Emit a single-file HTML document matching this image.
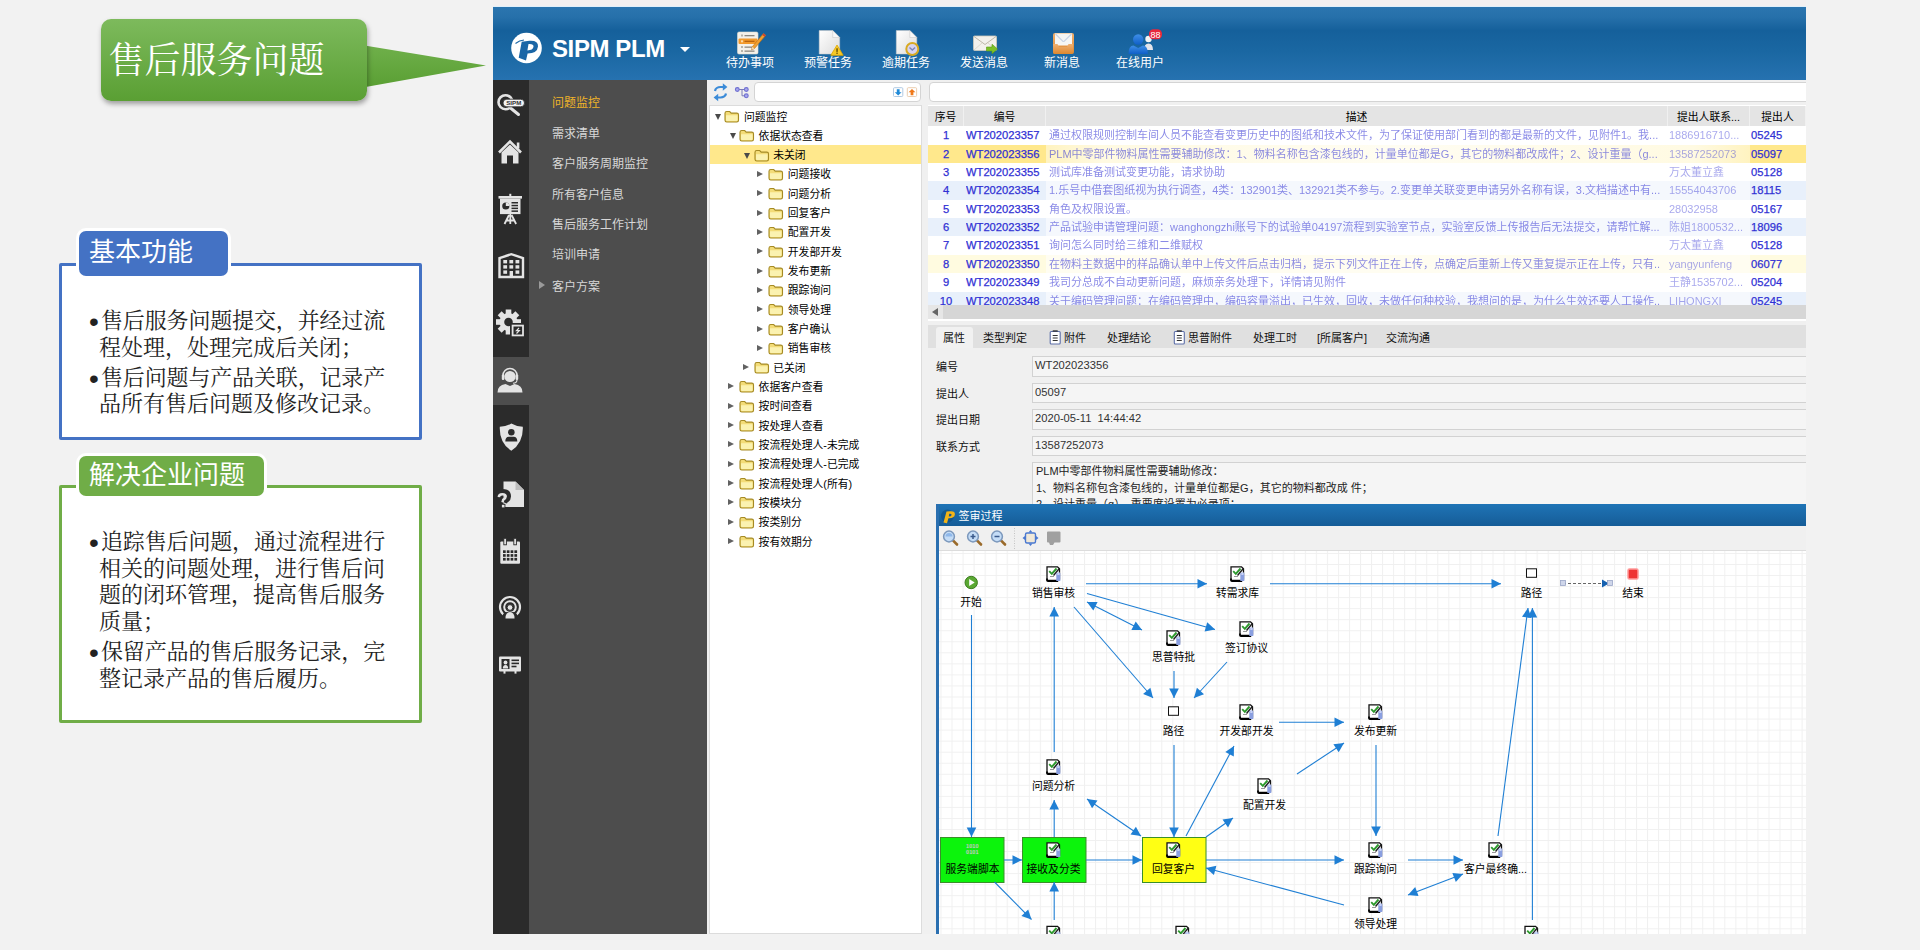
<!DOCTYPE html><html lang="zh"><head><meta charset="utf-8"><title>售后服务问题</title><style>
*{box-sizing:border-box;margin:0;padding:0}
html,body{width:1920px;height:950px;overflow:hidden;background:#f2f2f2}
body{position:relative;font-family:"Liberation Sans","Noto Sans CJK SC",sans-serif;font-size:12px;color:#000}
.abs{position:absolute}
.serif{font-family:"Liberation Serif","Noto Serif CJK SC",serif}
/* left slide part */
#callout{left:101px;top:19px;width:266px;height:82px;border-radius:10px;background:linear-gradient(#7dba5c,#5a9f33);box-shadow:1px 3px 5px rgba(0,0,0,.35)}
#callout-t{left:108.500px;top:33px;font-size:36px;line-height:56px;color:#fff;white-space:nowrap}
.box{background:#fff;border:3px solid #4472c4;border-radius:2px}
.tab{color:#fff;font-size:26px;border-radius:7px;box-shadow:0 0 0 3px #fff;white-space:nowrap;padding-left:10px}
.para{font-size:22px;line-height:26.6px;color:#222;white-space:nowrap}
/* app */
#app{left:493px;top:7px;width:1313px;height:927px;background:#f0f0f0;overflow:hidden}
#hdr{left:0;top:0;width:1313px;height:73px;background:linear-gradient(#2b75af 0%,#2670aa 14%,#15609b 32%,#1a67a2 60%,#2672b0 100%)}
#side1{left:0;top:73px;width:36px;height:854px;background:#2b2b2b}
#side2{left:36px;top:73px;width:178px;height:854px;background:#4d4d4d}
.menu{left:59px;color:#d8d8d8;font-size:12px;white-space:nowrap;line-height:16px}
.tb{color:#fff;font-size:12px;white-space:nowrap;text-align:center;width:70px;line-height:14px}
#treep{left:216px;top:98px;width:213px;height:829px;background:#fff;border:1px solid #dcdcdc}
.tr{left:0;width:211px;height:19.32px;line-height:19.32px;font-size:10.8px;white-space:nowrap}
.tw{position:absolute;top:0}
#grid{left:435px;top:98px;width:878px;height:216px;background:#fff}
.gh{top:.5px;height:21.500px;line-height:22px;background:#e4e4e4;text-align:center;font-size:10.8px;border-right:1px solid #f0f0f0;white-space:nowrap;overflow:hidden}
.gr{left:0;width:878px;height:18.4px;line-height:18.4px;font-size:11.2px;color:#3030d4;white-space:nowrap;-webkit-text-stroke:.25px #3030d4}
.gc{position:absolute;top:0;overflow:hidden;height:100%}
.blur{filter:blur(.6px);opacity:.56;font-size:11px;-webkit-text-stroke:0}
</style></head><body>
<svg class="abs" style="left:360px;top:40px" width="130" height="55" viewBox="0 0 130 55"><defs><linearGradient id="cg" x1="0" y1="0" x2="0" y2="1"><stop offset="0" stop-color="#6fb04b"/><stop offset="1" stop-color="#5a9f33"/></linearGradient></defs><polygon points="0,4.700 126,25.400 0,48" fill="url(#cg)"/></svg>
<div id="callout" class="abs"></div>
<div id="callout-t" class="abs serif">售后服务问题</div>
<div class="abs box" style="left:59px;top:263px;width:363px;height:177px"></div>
<div class="abs tab" style="left:79px;top:231px;width:149px;height:45px;line-height:43px;background:#4472c4">基本功能</div>
<div class="abs box" style="left:59px;top:485px;width:363px;height:238px;border-color:#70ad47"></div>
<div class="abs tab" style="left:79px;top:456px;width:185px;height:40px;line-height:38px;background:#70ad47">解决企业问题</div>
<div class="abs" style="left:89px;top:308.0px;font:28px/28px 'Liberation Sans',sans-serif;color:#222">•</div>
<div class="abs para serif" style="left:101px;top:307.7px;letter-spacing:-.15px">售后服务问题提交，并经过流</div>
<div class="abs para serif" style="left:99px;top:334.7px">程处理，处理完成后关闭；</div>
<div class="abs" style="left:89px;top:365.0px;font:28px/28px 'Liberation Sans',sans-serif;color:#222">•</div>
<div class="abs para serif" style="left:101px;top:364.7px;letter-spacing:-.15px">售后问题与产品关联，记录产</div>
<div class="abs para serif" style="left:99px;top:390.7px">品所有售后问题及修改记录。</div>
<div class="abs" style="left:89px;top:529.0px;font:28px/28px 'Liberation Sans',sans-serif;color:#222">•</div>
<div class="abs para serif" style="left:101px;top:528.7px;letter-spacing:-.15px">追踪售后问题，通过流程进行</div>
<div class="abs para serif" style="left:99px;top:555.7px">相关的问题处理，进行售后问</div>
<div class="abs para serif" style="left:99px;top:581.7px">题的闭环管理，提高售后服务</div>
<div class="abs para serif" style="left:99px;top:608.7px">质量；</div>
<div class="abs" style="left:89px;top:639.0px;font:28px/28px 'Liberation Sans',sans-serif;color:#222">•</div>
<div class="abs para serif" style="left:101px;top:638.7px;letter-spacing:-.15px">保留产品的售后服务记录，完</div>
<div class="abs para serif" style="left:99px;top:665.7px">整记录产品的售后履历。</div>
<div class="abs" style="left:493px;top:0;width:1313px;height:7px;background:#f3f0f0;border-bottom:1px solid #e2f0fa"></div>
<div id="app" class="abs">
<div id="hdr" class="abs"></div>
<div id="side1" class="abs"></div><div id="side2" class="abs"></div>
<div class="abs" style="left:0;top:350px;width:36px;height:48px;background:#4d4d4d"></div>
<div class="abs" style="left:59px;top:25px;font-size:24px;font-weight:bold;color:#fff;line-height:34px;letter-spacing:-.4px;white-space:nowrap">SIPM PLM</div>
<svg class="abs" style="left:17px;top:25px" width="32" height="32" viewBox="0 0 32 32"><circle cx="16.500" cy="16" r="15.300" fill="#fff"/><path d="M11.700 9.700L19.500 8.800Q28.500 8.300 28 14.500Q27.300 21.500 17.600 21.600L16 28.500L8.700 25.800Z M18.500 12Q23.800 11.600 23.500 14.800Q23 18.300 17.400 18.400Z" fill="#1a66a6" fill-rule="evenodd"/><path d="M5.500 11.500Q9.500 8.300 14 8" stroke="#1a66a6" stroke-width="1.100" fill="none"/></svg>
<div class="abs" style="left:187px;top:40px;width:0;height:0;border:5px solid transparent;border-top:5.500px solid #fff"></div>
<div class="abs tb" style="left:222px;top:49px">待办事项</div>
<div class="abs tb" style="left:300px;top:49px">预警任务</div>
<div class="abs tb" style="left:378px;top:49px">逾期任务</div>
<div class="abs tb" style="left:456px;top:49px">发送消息</div>
<div class="abs tb" style="left:534px;top:49px">新消息</div>
<div class="abs tb" style="left:612px;top:49px">在线用户</div>
<div class="abs menu" style="top:88px;color:#f0b429">问题监控</div>
<div class="abs menu" style="top:119px;">需求清单</div>
<div class="abs menu" style="top:149px;">客户服务周期监控</div>
<div class="abs menu" style="top:180px;">所有客户信息</div>
<div class="abs menu" style="top:210px;">售后服务工作计划</div>
<div class="abs menu" style="top:240px;">培训申请</div>
<div class="abs menu" style="top:272px;">客户方案</div>
<div class="abs" style="left:46px;top:274px;width:0;height:0;border:4px solid transparent;border-left:6px solid #9a9a9a"></div>
<svg class="abs" style="left:0;top:0" width="1313" height="73" viewBox="493 7 1313 73" font-family="Liberation Sans, sans-serif">
<defs><linearGradient id="pg" x1="0" y1="0" x2="1" y2="1"><stop offset="0" stop-color="#ffffff"/><stop offset="1" stop-color="#dcdcdc"/></linearGradient><linearGradient id="og" x1="0" y1="0" x2="0" y2="1"><stop offset="0" stop-color="#f0b070"/><stop offset="1" stop-color="#dd8830"/></linearGradient><linearGradient id="ug" x1="0" y1="0" x2="0" y2="1"><stop offset="0" stop-color="#3f8fe8"/><stop offset="1" stop-color="#0f5fc8"/></linearGradient></defs>
<rect x="737.500" y="32" width="20.500" height="22" rx="1.500" fill="#f4f1ea" stroke="#e2ddd0" stroke-width=".6"/>
<rect x="738.500" y="38.500" width="19" height="5.500" rx="1" fill="#f39a2b"/>
<g fill="#b8b4aa"><rect x="741" y="34.500" width="2" height="2"/><rect x="741" y="46" width="2" height="2"/><rect x="741" y="50" width="2" height="2"/></g><g fill="#8c8880"><rect x="744.500" y="35" width="10" height="1.300"/><rect x="744.500" y="46.500" width="8" height="1.300"/><rect x="744.500" y="50.500" width="10" height="1.300"/></g><rect x="741" y="40.300" width="2" height="2" fill="#fbd9a8"/><rect x="744.500" y="40.700" width="10" height="1.300" fill="#b8640f"/>
<path d="M763.500 33.500l2.200 1.800L754.500 48.500l-3 1.300l.8-3.100z" fill="#f0a030" stroke="#b86a10" stroke-width=".6"/><path d="M751.500 49.800l.8-3.100l2.200 1.800z" fill="#f2d9b0"/><path d="M762.300 35l2.200 1.800l1.200-1.500l-2.200-1.800z" fill="#d04030"/>
<path d="M819.2 30.500h13.500l7 7V54h-20.500z" fill="url(#pg)" stroke="#c8c8c8" stroke-width=".5"/><path d="M832.7 30.500v7h7z" fill="#f8f8f8" stroke="#c4c4c4" stroke-width=".5"/>
<path d="M837 45l6.200 10.300h-12.400z" fill="#f6c928" stroke="#e0a800" stroke-width=".8" stroke-linejoin="round"/><rect x="836.400" y="48.300" width="1.300" height="3.600" fill="#5a4500"/><rect x="836.400" y="52.600" width="1.300" height="1.300" fill="#5a4500"/>
<path d="M896.3 30.500h13.500l7 7V54h-20.500z" fill="url(#pg)" stroke="#c8c8c8" stroke-width=".5"/><path d="M909.8 30.500v7h7z" fill="#f8f8f8" stroke="#c4c4c4" stroke-width=".5"/>
<circle cx="912.300" cy="49" r="6" fill="#d9d3ee" stroke="#d9aa20" stroke-width="2"/><path d="M909.500 47.500l2.800 2.500l2.800-2.500" stroke="#7d86b8" stroke-width="1.400" fill="none"/>
<rect x="973.500" y="36" width="23" height="14.500" rx="1" fill="#f3f1ec" stroke="#cfcabb" stroke-width=".8"/><path d="M974 36.500l11 8l11-8" stroke="#bdb8a8" stroke-width="1" fill="none"/><path d="M974 50l8-7M996 50l-8-7" stroke="#d8d4c6" stroke-width=".8"/>
<path d="M986.500 47h5.500v-2.800l5.500 4.800l-5.500 4.800v-2.800h-5.500z" fill="#7cc028" stroke="#5a9a10" stroke-width=".6"/>
<rect x="1053" y="33" width="21" height="21" rx="2" fill="url(#og)"/><path d="M1055 33.500h17v12h-17z" fill="#f6f6f4"/><path d="M1055.500 34l7.500 7.500h1l7.500-7.500" stroke="#c9d4e4" stroke-width="1.200" fill="none"/><path d="M1053 44h4.500l1.500 3h8l1.500-3h4.500v8q0 2-2 2h-16q-2 0-2-2z" fill="url(#og)"/>
<circle cx="1148.500" cy="39" r="3.200" fill="#f4f4f4"/><path d="M1144 50q0-6.500 4.500-6.500t4.500 6.500z" fill="#e4e4ea"/>
<circle cx="1138.200" cy="39.500" r="5.200" fill="url(#ug)"/><path d="M1128.500 54q0-8.500 5-8.500l4.700 2.500l4.700-2.500q5 0 5 8.500z" fill="url(#ug)"/>
<rect x="1149" y="29.300" width="13" height="10" rx="4.500" fill="#e8283c"/><text x="1155.500" y="37.600" font-size="9" fill="#fff" text-anchor="middle">88</text>
</svg>
<svg class="abs" style="left:0;top:73px" width="36" height="854" viewBox="493 80 36 854" font-family="Liberation Sans, sans-serif">
<circle cx="505.500" cy="102.200" r="7" fill="none" stroke="#e4e4e4" stroke-width="2.600"/><path d="M510.500 108l8 6.500" stroke="#e4e4e4" stroke-width="3" stroke-linecap="round"/><rect x="503" y="99.200" width="21.500" height="7.600" rx="3.800" fill="#f4f4f4" stroke="#2b2b2b" stroke-width=".8"/><text x="513.800" y="105.300" font-size="6.200" font-weight="bold" fill="#333" text-anchor="middle">SIPM</text>
<path d="M499 152.500L510 141.500L521 152.500" stroke="#e4e4e4" stroke-width="2.600" fill="none" stroke-linejoin="miter"/><path d="M501.500 152.500L510 144.500L518.500 152.500V163.500H513V155.500H507V163.500H501.500z" fill="#e4e4e4"/><rect x="516.800" y="142.500" width="2.600" height="6" fill="#e4e4e4"/>
<rect x="498.500" y="196" width="23.500" height="2.600" fill="#e4e4e4"/><rect x="509.300" y="193.800" width="2" height="3" fill="#e4e4e4"/><rect x="500" y="198.600" width="20.500" height="15.500" fill="#e4e4e4"/><circle cx="505.800" cy="206" r="3.600" fill="#2b2b2b"/><path d="M505.800 206V202.400A3.600 3.600 0 0 1 509.400 206z" fill="#e4e4e4"/><g fill="#2b2b2b"><rect x="511.500" y="202" width="6.500" height="1.500"/><rect x="511.500" y="204.800" width="6.500" height="1.500"/><rect x="511.500" y="207.600" width="6.500" height="1.500"/><rect x="511.500" y="210.400" width="6.500" height="1.500"/></g><path d="M510.300 214v10M509 215l-4.500 9M511.600 215l4.500 9M506.500 220.500h7.600" stroke="#e4e4e4" stroke-width="1.800" fill="none"/>
<path d="M499.500 277V258L511.300 254.200L523 258V277z" fill="none" stroke="#e4e4e4" stroke-width="2.400"/>
<rect x="503.3" y="260.0" width="3.800" height="3.400" fill="#e4e4e4"/>
<rect x="509.4" y="260.0" width="3.800" height="3.400" fill="#e4e4e4"/>
<rect x="515.5" y="260.0" width="3.800" height="3.400" fill="#e4e4e4"/>
<rect x="503.3" y="265.2" width="3.800" height="3.400" fill="#e4e4e4"/>
<rect x="509.4" y="265.2" width="3.800" height="3.400" fill="#e4e4e4"/>
<rect x="515.5" y="265.2" width="3.800" height="3.400" fill="#e4e4e4"/>
<rect x="503.3" y="270.4" width="3.800" height="3.400" fill="#e4e4e4"/>
<rect x="509.6" y="271.0" width="3.400" height="6" fill="#e4e4e4"/>
<rect x="515.5" y="270.4" width="3.800" height="3.400" fill="#e4e4e4"/>
<rect x="505.7" y="309.5" width="5.600" height="6" fill="#e4e4e4" transform="rotate(0.0 508.5 322.0)"/>
<rect x="505.7" y="309.5" width="5.600" height="6" fill="#e4e4e4" transform="rotate(45.0 508.5 322.0)"/>
<rect x="505.7" y="309.5" width="5.600" height="6" fill="#e4e4e4" transform="rotate(90.0 508.5 322.0)"/>
<rect x="505.7" y="309.5" width="5.600" height="6" fill="#e4e4e4" transform="rotate(135.0 508.5 322.0)"/>
<rect x="505.7" y="309.5" width="5.600" height="6" fill="#e4e4e4" transform="rotate(180.0 508.5 322.0)"/>
<rect x="505.7" y="309.5" width="5.600" height="6" fill="#e4e4e4" transform="rotate(225.0 508.5 322.0)"/>
<rect x="505.7" y="309.5" width="5.600" height="6" fill="#e4e4e4" transform="rotate(270.0 508.5 322.0)"/>
<rect x="505.7" y="309.5" width="5.600" height="6" fill="#e4e4e4" transform="rotate(315.0 508.5 322.0)"/>
<circle cx="508.5" cy="322.0" r="9" fill="#e4e4e4"/><circle cx="508.5" cy="322.0" r="4.300" fill="#2b2b2b"/>
<rect x="510" y="323" width="15.500" height="15" fill="#2b2b2b"/><rect x="511.700" y="324.700" width="12.200" height="11.600" fill="#e4e4e4"/><rect x="513.500" y="326.500" width="8.600" height="8" fill="#2b2b2b"/><path d="M519 328l-2.500 2.600h2.800L516.500 333.500" stroke="#e4e4e4" stroke-width="1.200" fill="none"/>
<path d="M497.500 392.500q0-7.500 8-8.500l4.500 2l4.500-2q8 1 8 8.500z" fill="#e4e4e4"/><circle cx="510" cy="376.500" r="5.600" fill="#e4e4e4"/><path d="M503 377.500v-2a7 7 0 0 1 14 0v2" stroke="#e4e4e4" stroke-width="1.600" fill="none"/><rect x="501.800" y="374.500" width="2.600" height="5.500" rx="1" fill="#e4e4e4"/><rect x="515.600" y="374.500" width="2.600" height="5.500" rx="1" fill="#e4e4e4"/><path d="M517 380q0 3-4 3.300" stroke="#e4e4e4" stroke-width="1.100" fill="none"/>
<path d="M511.300 423.500q5 3 11.500 3.200q.7 16-11.500 24q-12.200-8-11.500-24q6.500-.2 11.500-3.200z" fill="#e4e4e4"/><circle cx="511.300" cy="432.300" r="3.300" fill="#2b2b2b"/><path d="M505.300 441.500q0-4.800 3.600-4.800h4.800q3.600 0 3.600 4.800z" fill="#2b2b2b"/>
<path d="M503.500 481.500h12l8.500 8.500v17h-20.500z" fill="#e4e4e4"/><path d="M515.500 481.500v8.500h8.500z" fill="#bdbdbd"/><path d="M496.500 497.500q0-5.500 5.800-5.500q5.700 0 5.700 4.500q0 2.500-3 4l-.8 2" stroke="#2b2b2b" stroke-width="6" fill="none"/><path d="M498.800 497.200q.2-3 3.500-3q3.400 0 3.400 2.300q0 1.500-2.500 3.200l-.7 2.600" stroke="#e4e4e4" stroke-width="2.500" fill="none"/><rect x="500.800" y="503.800" width="4.600" height="4.600" fill="#2b2b2b"/><rect x="501.900" y="504.800" width="2.600" height="2.600" fill="#e4e4e4"/>
<rect x="500.300" y="541.500" width="19.700" height="22.300" rx="1" fill="#e4e4e4"/><rect x="503.800" y="538.300" width="2.600" height="6.500" fill="#e4e4e4" stroke="#2b2b2b" stroke-width=".9"/><rect x="513.800" y="538.300" width="2.600" height="6.500" fill="#e4e4e4" stroke="#2b2b2b" stroke-width=".9"/>
<rect x="503.0" y="550.3" width="2.700" height="2.700" fill="#2b2b2b"/>
<rect x="506.8" y="550.3" width="2.700" height="2.700" fill="#2b2b2b"/>
<rect x="510.6" y="550.3" width="2.700" height="2.700" fill="#2b2b2b"/>
<rect x="514.4" y="550.3" width="2.700" height="2.700" fill="#2b2b2b"/>
<rect x="503.0" y="554.1" width="2.700" height="2.700" fill="#2b2b2b"/>
<rect x="506.8" y="554.1" width="2.700" height="2.700" fill="#2b2b2b"/>
<rect x="510.6" y="554.1" width="2.700" height="2.700" fill="#2b2b2b"/>
<rect x="514.4" y="554.1" width="2.700" height="2.700" fill="#2b2b2b"/>
<rect x="503.0" y="557.9" width="2.700" height="2.700" fill="#2b2b2b"/>
<rect x="506.8" y="557.9" width="2.700" height="2.700" fill="#2b2b2b"/>
<rect x="510.6" y="557.9" width="2.700" height="2.700" fill="#2b2b2b"/>
<rect x="514.4" y="557.9" width="2.700" height="2.700" fill="#2b2b2b"/>
<circle cx="510" cy="607" r="10" fill="none" stroke="#e4e4e4" stroke-width="2.200"/><circle cx="510" cy="607" r="5.800" fill="none" stroke="#e4e4e4" stroke-width="2"/><path d="M502 620q0-8 5-8h6q5 0 5 8z" fill="#2b2b2b"/><circle cx="510" cy="607.500" r="2.900" fill="#e4e4e4" stroke="#2b2b2b" stroke-width="1"/><path d="M505.500 618.500q0-6.500 4.500-6.500t4.500 6.500z" fill="#e4e4e4"/>
<rect x="499" y="656.500" width="22" height="15" rx="1" fill="#e4e4e4"/><rect x="501.500" y="659" width="8" height="10" fill="#2b2b2b"/><circle cx="505.500" cy="662.500" r="1.900" fill="#e4e4e4"/><path d="M502.800 668.500q0-3.600 2.700-3.600t2.700 3.600z" fill="#e4e4e4"/><g fill="#2b2b2b"><rect x="511.500" y="659.500" width="7.500" height="1.600"/><rect x="511.500" y="662.600" width="7.500" height="1.600"/><rect x="511.500" y="665.700" width="5" height="1.600"/></g><rect x="503.500" y="671" width="2" height="2.600" fill="#e4e4e4"/><rect x="514.500" y="671" width="2" height="2.600" fill="#e4e4e4"/>
</svg>
<div id="treep" class="abs">
<div class="abs tr" style="top:0.00px;"><div class="tw" style="left:5.0px;top:8px;width:0;height:0;border:3.200px solid transparent;border-top:6px solid #4a4a4a;border-bottom:0"></div><svg class="tw" style="left:14.3px;top:4px" width="16" height="13" viewBox="0 0 16 13"><path d="M1 3.200q0-1.700 1.700-1.700h3l1.500 1.600h5.600q1.700 0 1.700 1.700v5.500q0 1.700-1.700 1.700h-10.100q-1.700 0-1.700-1.700z" fill="#f3dc78" stroke="#a58a24" stroke-width="1.100"/><path d="M2 5.300h11.500v4.800q0 1-1 1h-9.500q-1 0-1-1z" fill="#fbf2b0"/></svg><span class="tw" style="left:34.0px;top:1.500px">问题监控</span></div>
<div class="abs tr" style="top:19.32px;"><div class="tw" style="left:19.6px;top:8px;width:0;height:0;border:3.200px solid transparent;border-top:6px solid #4a4a4a;border-bottom:0"></div><svg class="tw" style="left:28.9px;top:4px" width="16" height="13" viewBox="0 0 16 13"><path d="M1 3.200q0-1.700 1.700-1.700h3l1.500 1.600h5.600q1.700 0 1.700 1.700v5.500q0 1.700-1.700 1.700h-10.100q-1.700 0-1.700-1.700z" fill="#f3dc78" stroke="#a58a24" stroke-width="1.100"/><path d="M2 5.300h11.500v4.800q0 1-1 1h-9.500q-1 0-1-1z" fill="#fbf2b0"/></svg><span class="tw" style="left:48.6px;top:1.500px">依据状态查看</span></div>
<div class="abs tr" style="top:38.64px;background:#ffe88c;"><div class="tw" style="left:34.2px;top:8px;width:0;height:0;border:3.200px solid transparent;border-top:6px solid #4a4a4a;border-bottom:0"></div><svg class="tw" style="left:43.5px;top:4px" width="16" height="13" viewBox="0 0 16 13"><path d="M1 3.200q0-1.700 1.700-1.700h3l1.500 1.600h5.600q1.700 0 1.700 1.700v5.500q0 1.700-1.700 1.700h-10.100q-1.700 0-1.700-1.700z" fill="#f3dc78" stroke="#a58a24" stroke-width="1.100"/><path d="M2 5.300h11.500v4.800q0 1-1 1h-9.500q-1 0-1-1z" fill="#fbf2b0"/></svg><span class="tw" style="left:63.2px;top:1.500px">未关闭</span></div>
<div class="abs tr" style="top:57.96px;"><div class="tw" style="left:47.3px;top:7px;width:0;height:0;border:3.300px solid transparent;border-left:6px solid #626262;border-right:0"></div><svg class="tw" style="left:58.1px;top:4px" width="16" height="13" viewBox="0 0 16 13"><path d="M1 3.200q0-1.700 1.700-1.700h3l1.500 1.600h5.600q1.700 0 1.700 1.700v5.500q0 1.700-1.700 1.700h-10.100q-1.700 0-1.700-1.700z" fill="#f3dc78" stroke="#a58a24" stroke-width="1.100"/><path d="M2 5.300h11.500v4.800q0 1-1 1h-9.500q-1 0-1-1z" fill="#fbf2b0"/></svg><span class="tw" style="left:77.8px;top:1.500px">问题接收</span></div>
<div class="abs tr" style="top:77.28px;"><div class="tw" style="left:47.3px;top:7px;width:0;height:0;border:3.300px solid transparent;border-left:6px solid #626262;border-right:0"></div><svg class="tw" style="left:58.1px;top:4px" width="16" height="13" viewBox="0 0 16 13"><path d="M1 3.200q0-1.700 1.700-1.700h3l1.500 1.600h5.600q1.700 0 1.700 1.700v5.500q0 1.700-1.700 1.700h-10.100q-1.700 0-1.700-1.700z" fill="#f3dc78" stroke="#a58a24" stroke-width="1.100"/><path d="M2 5.300h11.500v4.800q0 1-1 1h-9.500q-1 0-1-1z" fill="#fbf2b0"/></svg><span class="tw" style="left:77.8px;top:1.500px">问题分析</span></div>
<div class="abs tr" style="top:96.60px;"><div class="tw" style="left:47.3px;top:7px;width:0;height:0;border:3.300px solid transparent;border-left:6px solid #626262;border-right:0"></div><svg class="tw" style="left:58.1px;top:4px" width="16" height="13" viewBox="0 0 16 13"><path d="M1 3.200q0-1.700 1.700-1.700h3l1.500 1.600h5.600q1.700 0 1.700 1.700v5.500q0 1.700-1.700 1.700h-10.100q-1.700 0-1.700-1.700z" fill="#f3dc78" stroke="#a58a24" stroke-width="1.100"/><path d="M2 5.300h11.500v4.800q0 1-1 1h-9.500q-1 0-1-1z" fill="#fbf2b0"/></svg><span class="tw" style="left:77.8px;top:1.500px">回复客户</span></div>
<div class="abs tr" style="top:115.92px;"><div class="tw" style="left:47.3px;top:7px;width:0;height:0;border:3.300px solid transparent;border-left:6px solid #626262;border-right:0"></div><svg class="tw" style="left:58.1px;top:4px" width="16" height="13" viewBox="0 0 16 13"><path d="M1 3.200q0-1.700 1.700-1.700h3l1.500 1.600h5.600q1.700 0 1.700 1.700v5.500q0 1.700-1.700 1.700h-10.100q-1.700 0-1.700-1.700z" fill="#f3dc78" stroke="#a58a24" stroke-width="1.100"/><path d="M2 5.300h11.500v4.800q0 1-1 1h-9.500q-1 0-1-1z" fill="#fbf2b0"/></svg><span class="tw" style="left:77.8px;top:1.500px">配置开发</span></div>
<div class="abs tr" style="top:135.24px;"><div class="tw" style="left:47.3px;top:7px;width:0;height:0;border:3.300px solid transparent;border-left:6px solid #626262;border-right:0"></div><svg class="tw" style="left:58.1px;top:4px" width="16" height="13" viewBox="0 0 16 13"><path d="M1 3.200q0-1.700 1.700-1.700h3l1.500 1.600h5.600q1.700 0 1.700 1.700v5.500q0 1.700-1.700 1.700h-10.100q-1.700 0-1.700-1.700z" fill="#f3dc78" stroke="#a58a24" stroke-width="1.100"/><path d="M2 5.300h11.500v4.800q0 1-1 1h-9.500q-1 0-1-1z" fill="#fbf2b0"/></svg><span class="tw" style="left:77.8px;top:1.500px">开发部开发</span></div>
<div class="abs tr" style="top:154.56px;"><div class="tw" style="left:47.3px;top:7px;width:0;height:0;border:3.300px solid transparent;border-left:6px solid #626262;border-right:0"></div><svg class="tw" style="left:58.1px;top:4px" width="16" height="13" viewBox="0 0 16 13"><path d="M1 3.200q0-1.700 1.700-1.700h3l1.500 1.600h5.600q1.700 0 1.700 1.700v5.500q0 1.700-1.700 1.700h-10.100q-1.700 0-1.700-1.700z" fill="#f3dc78" stroke="#a58a24" stroke-width="1.100"/><path d="M2 5.300h11.500v4.800q0 1-1 1h-9.500q-1 0-1-1z" fill="#fbf2b0"/></svg><span class="tw" style="left:77.8px;top:1.500px">发布更新</span></div>
<div class="abs tr" style="top:173.88px;"><div class="tw" style="left:47.3px;top:7px;width:0;height:0;border:3.300px solid transparent;border-left:6px solid #626262;border-right:0"></div><svg class="tw" style="left:58.1px;top:4px" width="16" height="13" viewBox="0 0 16 13"><path d="M1 3.200q0-1.700 1.700-1.700h3l1.500 1.600h5.600q1.700 0 1.700 1.700v5.500q0 1.700-1.700 1.700h-10.100q-1.700 0-1.700-1.700z" fill="#f3dc78" stroke="#a58a24" stroke-width="1.100"/><path d="M2 5.300h11.500v4.800q0 1-1 1h-9.500q-1 0-1-1z" fill="#fbf2b0"/></svg><span class="tw" style="left:77.8px;top:1.500px">跟踪询问</span></div>
<div class="abs tr" style="top:193.20px;"><div class="tw" style="left:47.3px;top:7px;width:0;height:0;border:3.300px solid transparent;border-left:6px solid #626262;border-right:0"></div><svg class="tw" style="left:58.1px;top:4px" width="16" height="13" viewBox="0 0 16 13"><path d="M1 3.200q0-1.700 1.700-1.700h3l1.500 1.600h5.600q1.700 0 1.700 1.700v5.500q0 1.700-1.700 1.700h-10.100q-1.700 0-1.700-1.700z" fill="#f3dc78" stroke="#a58a24" stroke-width="1.100"/><path d="M2 5.300h11.500v4.800q0 1-1 1h-9.500q-1 0-1-1z" fill="#fbf2b0"/></svg><span class="tw" style="left:77.8px;top:1.500px">领导处理</span></div>
<div class="abs tr" style="top:212.52px;"><div class="tw" style="left:47.3px;top:7px;width:0;height:0;border:3.300px solid transparent;border-left:6px solid #626262;border-right:0"></div><svg class="tw" style="left:58.1px;top:4px" width="16" height="13" viewBox="0 0 16 13"><path d="M1 3.200q0-1.700 1.700-1.700h3l1.500 1.600h5.600q1.700 0 1.700 1.700v5.500q0 1.700-1.700 1.700h-10.100q-1.700 0-1.700-1.700z" fill="#f3dc78" stroke="#a58a24" stroke-width="1.100"/><path d="M2 5.300h11.500v4.800q0 1-1 1h-9.500q-1 0-1-1z" fill="#fbf2b0"/></svg><span class="tw" style="left:77.8px;top:1.500px">客户确认</span></div>
<div class="abs tr" style="top:231.84px;"><div class="tw" style="left:47.3px;top:7px;width:0;height:0;border:3.300px solid transparent;border-left:6px solid #626262;border-right:0"></div><svg class="tw" style="left:58.1px;top:4px" width="16" height="13" viewBox="0 0 16 13"><path d="M1 3.200q0-1.700 1.700-1.700h3l1.500 1.600h5.600q1.700 0 1.700 1.700v5.500q0 1.700-1.700 1.700h-10.100q-1.700 0-1.700-1.700z" fill="#f3dc78" stroke="#a58a24" stroke-width="1.100"/><path d="M2 5.300h11.500v4.800q0 1-1 1h-9.500q-1 0-1-1z" fill="#fbf2b0"/></svg><span class="tw" style="left:77.8px;top:1.500px">销售审核</span></div>
<div class="abs tr" style="top:251.16px;"><div class="tw" style="left:32.7px;top:7px;width:0;height:0;border:3.300px solid transparent;border-left:6px solid #626262;border-right:0"></div><svg class="tw" style="left:43.5px;top:4px" width="16" height="13" viewBox="0 0 16 13"><path d="M1 3.200q0-1.700 1.700-1.700h3l1.500 1.600h5.600q1.700 0 1.700 1.700v5.500q0 1.700-1.700 1.700h-10.100q-1.700 0-1.700-1.700z" fill="#f3dc78" stroke="#a58a24" stroke-width="1.100"/><path d="M2 5.300h11.500v4.800q0 1-1 1h-9.500q-1 0-1-1z" fill="#fbf2b0"/></svg><span class="tw" style="left:63.2px;top:1.500px">已关闭</span></div>
<div class="abs tr" style="top:270.48px;"><div class="tw" style="left:18.1px;top:7px;width:0;height:0;border:3.300px solid transparent;border-left:6px solid #626262;border-right:0"></div><svg class="tw" style="left:28.9px;top:4px" width="16" height="13" viewBox="0 0 16 13"><path d="M1 3.200q0-1.700 1.700-1.700h3l1.500 1.600h5.600q1.700 0 1.700 1.700v5.500q0 1.700-1.700 1.700h-10.100q-1.700 0-1.700-1.700z" fill="#f3dc78" stroke="#a58a24" stroke-width="1.100"/><path d="M2 5.300h11.500v4.800q0 1-1 1h-9.500q-1 0-1-1z" fill="#fbf2b0"/></svg><span class="tw" style="left:48.6px;top:1.500px">依据客户查看</span></div>
<div class="abs tr" style="top:289.80px;"><div class="tw" style="left:18.1px;top:7px;width:0;height:0;border:3.300px solid transparent;border-left:6px solid #626262;border-right:0"></div><svg class="tw" style="left:28.9px;top:4px" width="16" height="13" viewBox="0 0 16 13"><path d="M1 3.200q0-1.700 1.700-1.700h3l1.500 1.600h5.600q1.700 0 1.700 1.700v5.500q0 1.700-1.700 1.700h-10.100q-1.700 0-1.700-1.700z" fill="#f3dc78" stroke="#a58a24" stroke-width="1.100"/><path d="M2 5.300h11.500v4.800q0 1-1 1h-9.500q-1 0-1-1z" fill="#fbf2b0"/></svg><span class="tw" style="left:48.6px;top:1.500px">按时间查看</span></div>
<div class="abs tr" style="top:309.12px;"><div class="tw" style="left:18.1px;top:7px;width:0;height:0;border:3.300px solid transparent;border-left:6px solid #626262;border-right:0"></div><svg class="tw" style="left:28.9px;top:4px" width="16" height="13" viewBox="0 0 16 13"><path d="M1 3.200q0-1.700 1.700-1.700h3l1.500 1.600h5.600q1.700 0 1.700 1.700v5.500q0 1.700-1.700 1.700h-10.100q-1.700 0-1.700-1.700z" fill="#f3dc78" stroke="#a58a24" stroke-width="1.100"/><path d="M2 5.300h11.500v4.800q0 1-1 1h-9.500q-1 0-1-1z" fill="#fbf2b0"/></svg><span class="tw" style="left:48.6px;top:1.500px">按处理人查看</span></div>
<div class="abs tr" style="top:328.44px;"><div class="tw" style="left:18.1px;top:7px;width:0;height:0;border:3.300px solid transparent;border-left:6px solid #626262;border-right:0"></div><svg class="tw" style="left:28.9px;top:4px" width="16" height="13" viewBox="0 0 16 13"><path d="M1 3.200q0-1.700 1.700-1.700h3l1.500 1.600h5.600q1.700 0 1.700 1.700v5.500q0 1.700-1.700 1.700h-10.100q-1.700 0-1.700-1.700z" fill="#f3dc78" stroke="#a58a24" stroke-width="1.100"/><path d="M2 5.300h11.500v4.800q0 1-1 1h-9.500q-1 0-1-1z" fill="#fbf2b0"/></svg><span class="tw" style="left:48.6px;top:1.500px">按流程处理人-未完成</span></div>
<div class="abs tr" style="top:347.76px;"><div class="tw" style="left:18.1px;top:7px;width:0;height:0;border:3.300px solid transparent;border-left:6px solid #626262;border-right:0"></div><svg class="tw" style="left:28.9px;top:4px" width="16" height="13" viewBox="0 0 16 13"><path d="M1 3.200q0-1.700 1.700-1.700h3l1.500 1.600h5.600q1.700 0 1.700 1.700v5.500q0 1.700-1.700 1.700h-10.100q-1.700 0-1.700-1.700z" fill="#f3dc78" stroke="#a58a24" stroke-width="1.100"/><path d="M2 5.300h11.500v4.800q0 1-1 1h-9.500q-1 0-1-1z" fill="#fbf2b0"/></svg><span class="tw" style="left:48.6px;top:1.500px">按流程处理人-已完成</span></div>
<div class="abs tr" style="top:367.08px;"><div class="tw" style="left:18.1px;top:7px;width:0;height:0;border:3.300px solid transparent;border-left:6px solid #626262;border-right:0"></div><svg class="tw" style="left:28.9px;top:4px" width="16" height="13" viewBox="0 0 16 13"><path d="M1 3.200q0-1.700 1.700-1.700h3l1.500 1.600h5.600q1.700 0 1.700 1.700v5.500q0 1.700-1.700 1.700h-10.100q-1.700 0-1.700-1.700z" fill="#f3dc78" stroke="#a58a24" stroke-width="1.100"/><path d="M2 5.300h11.500v4.800q0 1-1 1h-9.500q-1 0-1-1z" fill="#fbf2b0"/></svg><span class="tw" style="left:48.6px;top:1.500px">按流程处理人(所有)</span></div>
<div class="abs tr" style="top:386.40px;"><div class="tw" style="left:18.1px;top:7px;width:0;height:0;border:3.300px solid transparent;border-left:6px solid #626262;border-right:0"></div><svg class="tw" style="left:28.9px;top:4px" width="16" height="13" viewBox="0 0 16 13"><path d="M1 3.200q0-1.700 1.700-1.700h3l1.500 1.600h5.600q1.700 0 1.700 1.700v5.500q0 1.700-1.700 1.700h-10.100q-1.700 0-1.700-1.700z" fill="#f3dc78" stroke="#a58a24" stroke-width="1.100"/><path d="M2 5.300h11.500v4.800q0 1-1 1h-9.500q-1 0-1-1z" fill="#fbf2b0"/></svg><span class="tw" style="left:48.6px;top:1.500px">按模块分</span></div>
<div class="abs tr" style="top:405.72px;"><div class="tw" style="left:18.1px;top:7px;width:0;height:0;border:3.300px solid transparent;border-left:6px solid #626262;border-right:0"></div><svg class="tw" style="left:28.9px;top:4px" width="16" height="13" viewBox="0 0 16 13"><path d="M1 3.200q0-1.700 1.700-1.700h3l1.500 1.600h5.600q1.700 0 1.700 1.700v5.500q0 1.700-1.700 1.700h-10.100q-1.700 0-1.700-1.700z" fill="#f3dc78" stroke="#a58a24" stroke-width="1.100"/><path d="M2 5.300h11.500v4.800q0 1-1 1h-9.500q-1 0-1-1z" fill="#fbf2b0"/></svg><span class="tw" style="left:48.6px;top:1.500px">按类别分</span></div>
<div class="abs tr" style="top:425.04px;"><div class="tw" style="left:18.1px;top:7px;width:0;height:0;border:3.300px solid transparent;border-left:6px solid #626262;border-right:0"></div><svg class="tw" style="left:28.9px;top:4px" width="16" height="13" viewBox="0 0 16 13"><path d="M1 3.200q0-1.700 1.700-1.700h3l1.500 1.600h5.600q1.700 0 1.700 1.700v5.500q0 1.700-1.700 1.700h-10.100q-1.700 0-1.700-1.700z" fill="#f3dc78" stroke="#a58a24" stroke-width="1.100"/><path d="M2 5.300h11.500v4.800q0 1-1 1h-9.500q-1 0-1-1z" fill="#fbf2b0"/></svg><span class="tw" style="left:48.6px;top:1.500px">按有效期分</span></div>
</div>
<div id="grid" class="abs">
<div class="abs gh" style="left:0px;width:36px">序号</div>
<div class="abs gh" style="left:36px;width:82px">编号</div>
<div class="abs gh" style="left:118px;width:622px">描述</div>
<div class="abs gh" style="left:740px;width:82px">提出人联系...</div>
<div class="abs gh" style="left:822px;width:56px">提出人</div>
<div class="abs gr" style="top:21.1px;background:#fff">
<div class="gc" style="left:118px;width:704px;background:rgba(255,255,255,.55)"></div>
<div class="gc" style="left:0;width:36px;text-align:center">1</div>
<div class="gc" style="left:38px;width:80px">WT202023357</div>
<div class="gc blur" style="left:121px;width:612px">通过权限规则控制车间人员不能查看变更历史中的图纸和技术文件，为了保证使用部门看到的都是最新的文件，见附件1。我...</div>
<div class="gc blur" style="left:741px;width:80px;opacity:.42">1886916710...</div>
<div class="gc" style="left:823px;width:55px">05245</div>
</div>
<div class="abs gr" style="top:39.5px;background:#fff">
<div class="gc" style="left:0;width:118px;background:#ffe88c"></div><div class="gc" style="left:822px;width:56px;background:#ffe88c"></div><div class="gc" style="left:118px;width:704px;background:linear-gradient(90deg,#fff3c0,#fffae2 8%,#fffdf2 50%,#fffae2 92%,#fff3c0)"></div>
<div class="gc" style="left:0;width:36px;text-align:center">2</div>
<div class="gc" style="left:38px;width:80px">WT202023356</div>
<div class="gc blur" style="left:121px;width:612px">PLM中零部件物料属性需要辅助修改：1、物料名称包含漆包线的，计量单位都是G，其它的物料都改成件；2、设计重量（g...</div>
<div class="gc blur" style="left:741px;width:80px;opacity:.42">13587252073</div>
<div class="gc" style="left:823px;width:55px">05097</div>
</div>
<div class="abs gr" style="top:57.9px;background:#fff">
<div class="gc" style="left:118px;width:704px;background:rgba(255,255,255,.55)"></div>
<div class="gc" style="left:0;width:36px;text-align:center">3</div>
<div class="gc" style="left:38px;width:80px">WT202023355</div>
<div class="gc blur" style="left:121px;width:612px">测试库准备测试变更功能，请求协助</div>
<div class="gc blur" style="left:741px;width:80px;opacity:.42">万太董立鑫</div>
<div class="gc" style="left:823px;width:55px">05128</div>
</div>
<div class="abs gr" style="top:76.3px;background:#e8f0fb">
<div class="gc" style="left:118px;width:704px;background:rgba(255,255,255,.55)"></div>
<div class="gc" style="left:0;width:36px;text-align:center">4</div>
<div class="gc" style="left:38px;width:80px">WT202023354</div>
<div class="gc blur" style="left:121px;width:612px">1.乐号中借套图纸视为执行调查，4类：132901类、132921类不参与。2.变更单关联变更申请另外名称有误，3.文档描述中有...</div>
<div class="gc blur" style="left:741px;width:80px;opacity:.42">15554043706</div>
<div class="gc" style="left:823px;width:55px">18115</div>
</div>
<div class="abs gr" style="top:94.7px;background:#fff">
<div class="gc" style="left:118px;width:704px;background:rgba(255,255,255,.55)"></div>
<div class="gc" style="left:0;width:36px;text-align:center">5</div>
<div class="gc" style="left:38px;width:80px">WT202023353</div>
<div class="gc blur" style="left:121px;width:612px">角色及权限设置。</div>
<div class="gc blur" style="left:741px;width:80px;opacity:.42">28032958</div>
<div class="gc" style="left:823px;width:55px">05167</div>
</div>
<div class="abs gr" style="top:113.1px;background:#e8f0fb">
<div class="gc" style="left:118px;width:704px;background:rgba(255,255,255,.55)"></div>
<div class="gc" style="left:0;width:36px;text-align:center">6</div>
<div class="gc" style="left:38px;width:80px">WT202023352</div>
<div class="gc blur" style="left:121px;width:612px">产品试验申请管理问题：wanghongzhi账号下的试验单04197流程到实验室节点，实验室反馈上传报告后无法提交，请帮忙解...</div>
<div class="gc blur" style="left:741px;width:80px;opacity:.42">陈姐1800532...</div>
<div class="gc" style="left:823px;width:55px">18096</div>
</div>
<div class="abs gr" style="top:131.4px;background:#fff">
<div class="gc" style="left:118px;width:704px;background:rgba(255,255,255,.55)"></div>
<div class="gc" style="left:0;width:36px;text-align:center">7</div>
<div class="gc" style="left:38px;width:80px">WT202023351</div>
<div class="gc blur" style="left:121px;width:612px">询问怎么同时给三维和二维赋权</div>
<div class="gc blur" style="left:741px;width:80px;opacity:.42">万太董立鑫</div>
<div class="gc" style="left:823px;width:55px">05128</div>
</div>
<div class="abs gr" style="top:149.8px;background:#fffbe0">
<div class="gc" style="left:118px;width:704px;background:rgba(255,255,255,.55)"></div>
<div class="gc" style="left:0;width:36px;text-align:center">8</div>
<div class="gc" style="left:38px;width:80px">WT202023350</div>
<div class="gc blur" style="left:121px;width:612px">在物料主数据中的样品确认单中上传文件后点击归档，提示下列文件正在上传，点确定后重新上传又重复提示正在上传，只有...</div>
<div class="gc blur" style="left:741px;width:80px;opacity:.42">yangyunfeng</div>
<div class="gc" style="left:823px;width:55px">06077</div>
</div>
<div class="abs gr" style="top:168.2px;background:#fff">
<div class="gc" style="left:118px;width:704px;background:rgba(255,255,255,.55)"></div>
<div class="gc" style="left:0;width:36px;text-align:center">9</div>
<div class="gc" style="left:38px;width:80px">WT202023349</div>
<div class="gc blur" style="left:121px;width:612px">我司分总成不自动更新问题，麻烦亲务处理下，详情请见附件</div>
<div class="gc blur" style="left:741px;width:80px;opacity:.42">王静1535702...</div>
<div class="gc" style="left:823px;width:55px">05204</div>
</div>
<div class="abs gr" style="top:186.6px;background:#e8f0fb">
<div class="gc" style="left:118px;width:704px;background:rgba(255,255,255,.55)"></div>
<div class="gc" style="left:0;width:36px;text-align:center">10</div>
<div class="gc" style="left:38px;width:80px">WT202023348</div>
<div class="gc blur" style="left:121px;width:612px">关于编码管理问题：在编码管理中，编码容量溢出，已生效，回收，未做任何种校验，我想问的是，为什么生效还要人工操作...</div>
<div class="gc blur" style="left:741px;width:80px;opacity:.42">LIHONGXI</div>
<div class="gc" style="left:823px;width:55px">05245</div>
</div>
</div>
<div class="abs" style="left:261px;top:75px;width:167px;height:19.500px;background:#fff;border:1px solid #d4d4d4;border-radius:4px"></div>
<div class="abs" style="left:436px;top:75px;width:890px;height:19.500px;background:#fff;border:1px solid #d4d4d4;border-radius:4px"></div>
<svg class="abs" style="left:213px;top:71px" width="220" height="30" viewBox="706 78 220 30">
<g fill="none" stroke="#3b8bd8" stroke-width="2.200"><path d="M715 91a5.500 4.500 0 0 1 5.500-4h3"/><path d="M726 93.500a5.500 4.500 0 0 1-5.500 4h-3"/></g><path d="M722.800 83.300l4.600 3.700l-4.600 3.700z" fill="#3b8bd8"/><path d="M718.200 93.800l-4.600 3.700l4.600 3.700z" fill="#3b8bd8"/>
<path d="M737.500 89.500h9M742 89.500v6.300h4.500" stroke="#7a7ab8" stroke-width="1" fill="none"/><g fill="#a9a9ee" stroke="#6f6fd0" stroke-width="1.100"><circle cx="737.300" cy="89.500" r="1.900"/><circle cx="746.300" cy="89.500" r="1.900"/><circle cx="746.300" cy="95.800" r="1.900"/></g>
<rect x="893.500" y="87.700" width="9.300" height="8.800" rx="1" fill="#fff" stroke="#a8c4e0" stroke-width=".9"/><path d="M896.800 89.300h2.800v3h2l-3.400 3.300l-3.400-3.300h2z" fill="#1f8ad8"/>
<rect x="907.300" y="87.700" width="9.300" height="8.800" rx="1" fill="#fff" stroke="#e8c8a8" stroke-width=".9"/><path d="M910.600 95.300h2.800v-3h2l-3.400-3.300l-3.400 3.300h2z" fill="#f07818"/>
</svg>
<div class="abs" style="left:435px;top:298px;width:878px;height:14px;background:#d6d6d6"></div>
<div class="abs" style="left:435px;top:298px;width:15px;height:14px;background:#e6e6e6"></div>
<div class="abs" style="left:439px;top:301px;width:0;height:0;border:4px solid transparent;border-right:6px solid #666;border-left:0"></div>
<div class="abs" style="left:435px;top:318px;width:878px;height:23px;background:#e0e0e0"></div>
<div class="abs" style="left:443px;top:320px;width:37px;height:21px;background:#f1f1f1;border-radius:3px 3px 0 0"></div>
<div class="abs" style="left:450px;top:323px;font-size:11px;line-height:16px;white-space:nowrap;color:#111">属性</div>
<div class="abs" style="left:490px;top:323px;font-size:11px;line-height:16px;white-space:nowrap;color:#111">类型判定</div>
<div class="abs" style="left:571px;top:323px;font-size:11px;line-height:16px;white-space:nowrap;color:#111">附件</div>
<div class="abs" style="left:614px;top:323px;font-size:11px;line-height:16px;white-space:nowrap;color:#111">处理结论</div>
<div class="abs" style="left:695px;top:323px;font-size:11px;line-height:16px;white-space:nowrap;color:#111">思普附件</div>
<div class="abs" style="left:760px;top:323px;font-size:11px;line-height:16px;white-space:nowrap;color:#111">处理工时</div>
<div class="abs" style="left:824px;top:323px;font-size:11px;line-height:16px;white-space:nowrap;color:#111">[所属客户]</div>
<div class="abs" style="left:893px;top:323px;font-size:11px;line-height:16px;white-space:nowrap;color:#111">交流沟通</div>
<div class="abs" style="left:443px;top:350.0px;font-size:11px;line-height:20px;white-space:nowrap;color:#111">编号</div>
<div class="abs" style="left:539px;top:349.0px;width:790px;height:20.500px;background:#f5f5f5;border:1px solid #d2d2d2;font-size:11.2px;line-height:17px;padding-left:2px;color:#333;white-space:pre">WT202023356</div>
<div class="abs" style="left:443px;top:376.6px;font-size:11px;line-height:20px;white-space:nowrap;color:#111">提出人</div>
<div class="abs" style="left:539px;top:375.6px;width:790px;height:20.500px;background:#f5f5f5;border:1px solid #d2d2d2;font-size:11.2px;line-height:17px;padding-left:2px;color:#333;white-space:pre">05097</div>
<div class="abs" style="left:443px;top:403.2px;font-size:11px;line-height:20px;white-space:nowrap;color:#111">提出日期</div>
<div class="abs" style="left:539px;top:402.2px;width:790px;height:20.500px;background:#f5f5f5;border:1px solid #d2d2d2;font-size:11.2px;line-height:17px;padding-left:2px;color:#333;white-space:pre">2020-05-11  14:44:42</div>
<div class="abs" style="left:443px;top:429.8px;font-size:11px;line-height:20px;white-space:nowrap;color:#111">联系方式</div>
<div class="abs" style="left:539px;top:428.8px;width:790px;height:20.500px;background:#f5f5f5;border:1px solid #d2d2d2;font-size:11.2px;line-height:17px;padding-left:2px;color:#333;white-space:pre">13587252073</div>
<div class="abs" style="left:539px;top:455px;width:790px;height:60px;background:#f5f5f5;border:1px solid #d2d2d2;font-size:11px;line-height:16.500px;padding:0 0 0 3px;color:#222;white-space:nowrap">PLM中零部件物料属性需要辅助修改：<br>1、物料名称包含漆包线的，计量单位都是G，其它的物料都改成 件；<br>2、设计重量（g）、重要度设置为必录项；</div>
<div class="abs" style="left:443px;top:497px;width:880px;height:440px;background:#fff;border-left:3px solid #2a6fb0;overflow:hidden">
<div class="abs" style="left:0;top:0;width:880px;height:22px;background:linear-gradient(#1f74b6,#155c97)"></div>
<div class="abs" style="left:19.500px;top:3.500px;font-size:11px;line-height:16px;color:#fff;white-space:nowrap">签审过程</div>
<div class="abs" style="left:0;top:22px;width:880px;height:25px;background:#f0f0f0;border-bottom:1px solid #dcdcdc"></div>
<svg class="abs" style="left:0;top:47px" width="880" height="400" viewBox="0 0 880 400"><defs><pattern id="gp" width="11.04" height="11.04" patternUnits="userSpaceOnUse" x="1.5" y="2"><path d="M0 0.5H11.040M0.500 0V11.040" stroke="#f0f0f0" stroke-width="1" fill="none"/></pattern></defs><rect width="880" height="400" fill="#fff"/><rect width="880" height="400" fill="url(#gp)"/></svg>
</div>
<svg class="abs" style="left:435px;top:318px" width="878px" height="240" viewBox="928 325 878 240">
<rect x="1050.2" y="331.500" width="10" height="12.500" rx="1" fill="#fff" stroke="#5c6ea8" stroke-width="1.100"/><path d="M1052.7 335.500h5M1052.7 338h5M1052.7 340.500h5" stroke="#333" stroke-width="1"/><path d="M1052.7 331h5" stroke="#333" stroke-width="1.400"/>
<rect x="1174.3" y="331.500" width="10" height="12.500" rx="1" fill="#fff" stroke="#5c6ea8" stroke-width="1.100"/><path d="M1176.8 335.500h5M1176.8 338h5M1176.8 340.500h5" stroke="#333" stroke-width="1"/><path d="M1176.8 331h5" stroke="#333" stroke-width="1.400"/>
<path d="M953.2 540.7l3.800 3.800" stroke="#9a6a2a" stroke-width="2.600" stroke-linecap="round"/><circle cx="949.0" cy="536.5" r="5.400" fill="#c4dcf6" stroke="#7c98bc" stroke-width="1.500"/><path d="M945.5 536.5a3.500 3.500 0 0 1 7 0z" fill="#8fb8ea"/>
<path d="M977.2 540.7l3.800 3.800" stroke="#9a6a2a" stroke-width="2.600" stroke-linecap="round"/><circle cx="973.0" cy="536.5" r="5.400" fill="#c4dcf6" stroke="#7c98bc" stroke-width="1.500"/><path d="M970.5 536.5h5M973.0 534.0v5" stroke="#3a5a8c" stroke-width="1.500"/>
<path d="M1001.2 540.7l3.800 3.800" stroke="#9a6a2a" stroke-width="2.600" stroke-linecap="round"/><circle cx="997.0" cy="536.5" r="5.400" fill="#c4dcf6" stroke="#7c98bc" stroke-width="1.500"/><path d="M994.5 536.5h5" stroke="#3a5a8c" stroke-width="1.500"/>
<path d="M1014.500 528v21" stroke="#c4c4c4" stroke-width="1" stroke-dasharray="1 1.500"/>
<rect x="1025.500" y="533" width="10" height="10" rx="1.500" fill="#f0e8d8" stroke="#4a78d0" stroke-width="1.400"/><g fill="#4a78d0"><path d="M1030.500 530l2 2.500h-4z"/><path d="M1030.500 546l2-2.500h-4z"/><path d="M1022.500 538l2.500-2v4z"/><path d="M1038.500 538l-2.500-2v4z"/></g>
<path d="M1047 532.500q0-1 1-1h11.500q1 0 1 1v9q0 1-1 1h-5l-1.500 2.500h-3l-1-2.500h-1q-1 0-1-1z" fill="#a0a0a0"/>
<circle cx="947.500" cy="516" r="6.500" fill="#0f4a7c" opacity=".55"/><path d="M946.500 511.500l-3 11l3.500 .8l1.400-5q6 .2 6.500-3.800q.2-3.800-4.900-3.200z M949.200 513.800q2.500-.3 2.400 1.200q-.3 1.500-2.800 1.500z" fill="#f2b418" fill-rule="evenodd"/>
</svg>
<svg class="abs" style="left:446px;top:544px" width="867" height="383" viewBox="939 551 867 383" font-family="Liberation Sans, Noto Sans CJK SC, sans-serif" font-size="10.800">
<rect x="940.5" y="837.5" width="63.500" height="45" fill="#0cf40c" stroke="#3a8f2a" stroke-width="1"/>
<rect x="1022.5" y="837.5" width="63.500" height="45" fill="#0cf40c" stroke="#3a8f2a" stroke-width="1"/>
<rect x="1142.5" y="837.5" width="63.500" height="45" fill="#ffff14" stroke="#3a8f2a" stroke-width="1"/>
<line x1="971.5" y1="615.0" x2="971.5" y2="837.0" stroke="#1f7fd4" stroke-width="1.1"/><polygon points="971.5,837.0 966.7,827.5 976.3,827.5" fill="#1f7fd4"/>
<line x1="1004.0" y1="860.0" x2="1022.0" y2="860.0" stroke="#1f7fd4" stroke-width="1.1"/><polygon points="1022.0,860.0 1012.5,864.8 1012.5,855.2" fill="#1f7fd4"/>
<line x1="1086.0" y1="860.0" x2="1142.0" y2="860.0" stroke="#1f7fd4" stroke-width="1.1"/><polygon points="1142.0,860.0 1132.5,864.8 1132.5,855.2" fill="#1f7fd4"/>
<line x1="1054.2" y1="837.0" x2="1054.2" y2="800.0" stroke="#1f7fd4" stroke-width="1.1"/><polygon points="1054.2,800.0 1059.0,809.5 1049.4,809.5" fill="#1f7fd4"/>
<line x1="1054.2" y1="752.0" x2="1054.2" y2="607.0" stroke="#1f7fd4" stroke-width="1.1"/><polygon points="1054.2,607.0 1059.0,616.5 1049.4,616.5" fill="#1f7fd4"/>
<line x1="1086.0" y1="583.8" x2="1207.0" y2="583.8" stroke="#1f7fd4" stroke-width="1.1"/><polygon points="1207.0,583.8 1197.5,588.6 1197.5,579.0" fill="#1f7fd4"/>
<line x1="1270.0" y1="583.8" x2="1501.0" y2="583.8" stroke="#1f7fd4" stroke-width="1.1"/><polygon points="1501.0,583.8 1491.5,588.6 1491.5,579.0" fill="#1f7fd4"/>
<line x1="1087.0" y1="602.0" x2="1142.0" y2="630.0" stroke="#1f7fd4" stroke-width="1.1"/><polygon points="1142.0,630.0 1131.4,630.0 1135.7,621.4" fill="#1f7fd4"/><polygon points="1087.0,602.0 1097.6,602.0 1093.3,610.6" fill="#1f7fd4"/>
<line x1="1087.0" y1="593.5" x2="1215.0" y2="629.5" stroke="#1f7fd4" stroke-width="1.1"/><polygon points="1215.0,629.5 1204.6,631.5 1207.2,622.3" fill="#1f7fd4"/>
<line x1="1074.0" y1="607.0" x2="1153.0" y2="698.0" stroke="#1f7fd4" stroke-width="1.1"/><polygon points="1153.0,698.0 1143.1,694.0 1150.4,687.7" fill="#1f7fd4"/>
<line x1="1174.0" y1="671.0" x2="1174.0" y2="698.0" stroke="#1f7fd4" stroke-width="1.1"/><polygon points="1174.0,698.0 1169.2,688.5 1178.8,688.5" fill="#1f7fd4"/>
<line x1="1227.0" y1="662.0" x2="1194.0" y2="698.0" stroke="#1f7fd4" stroke-width="1.1"/><polygon points="1194.0,698.0 1196.9,687.8 1204.0,694.2" fill="#1f7fd4"/>
<line x1="1174.0" y1="745.0" x2="1174.0" y2="837.0" stroke="#1f7fd4" stroke-width="1.1"/><polygon points="1174.0,837.0 1169.2,827.5 1178.8,827.5" fill="#1f7fd4"/>
<line x1="1087.0" y1="799.0" x2="1141.0" y2="836.0" stroke="#1f7fd4" stroke-width="1.1"/><polygon points="1141.0,836.0 1130.5,834.6 1135.9,826.7" fill="#1f7fd4"/><polygon points="1087.0,799.0 1097.5,800.4 1092.1,808.3" fill="#1f7fd4"/>
<line x1="1186.0" y1="836.0" x2="1234.0" y2="746.0" stroke="#1f7fd4" stroke-width="1.1"/><polygon points="1234.0,746.0 1233.8,756.6 1225.3,752.1" fill="#1f7fd4"/>
<line x1="1206.0" y1="837.0" x2="1233.0" y2="818.0" stroke="#1f7fd4" stroke-width="1.1"/><polygon points="1233.0,818.0 1228.0,827.4 1222.5,819.5" fill="#1f7fd4"/>
<line x1="1279.0" y1="722.3" x2="1344.0" y2="722.3" stroke="#1f7fd4" stroke-width="1.1"/><polygon points="1344.0,722.3 1334.5,727.1 1334.5,717.5" fill="#1f7fd4"/>
<line x1="1297.0" y1="774.0" x2="1344.0" y2="743.0" stroke="#1f7fd4" stroke-width="1.1"/><polygon points="1344.0,743.0 1338.7,752.2 1333.4,744.2" fill="#1f7fd4"/>
<line x1="1376.0" y1="745.0" x2="1376.0" y2="836.0" stroke="#1f7fd4" stroke-width="1.1"/><polygon points="1376.0,836.0 1371.2,826.5 1380.8,826.5" fill="#1f7fd4"/>
<line x1="1206.0" y1="860.0" x2="1344.0" y2="860.0" stroke="#1f7fd4" stroke-width="1.1"/><polygon points="1344.0,860.0 1334.5,864.8 1334.5,855.2" fill="#1f7fd4"/>
<line x1="1344.0" y1="905.0" x2="1206.0" y2="868.0" stroke="#1f7fd4" stroke-width="1.1"/><polygon points="1206.0,868.0 1216.4,865.8 1213.9,875.1" fill="#1f7fd4"/>
<line x1="1408.0" y1="860.0" x2="1463.0" y2="860.0" stroke="#1f7fd4" stroke-width="1.1"/><polygon points="1463.0,860.0 1453.5,864.8 1453.5,855.2" fill="#1f7fd4"/>
<line x1="1408.0" y1="895.0" x2="1463.0" y2="874.0" stroke="#1f7fd4" stroke-width="1.1"/><polygon points="1463.0,874.0 1455.8,881.9 1452.4,872.9" fill="#1f7fd4"/><polygon points="1408.0,895.0 1415.2,887.1 1418.6,896.1" fill="#1f7fd4"/>
<line x1="1498.0" y1="836.0" x2="1528.0" y2="608.0" stroke="#1f7fd4" stroke-width="1.1"/><polygon points="1528.0,608.0 1531.5,618.0 1522.0,616.8" fill="#1f7fd4"/>
<line x1="1532.4" y1="920.0" x2="1532.4" y2="608.0" stroke="#1f7fd4" stroke-width="1.1"/><polygon points="1532.4,608.0 1537.2,617.5 1527.6,617.5" fill="#1f7fd4"/>
<line x1="994.5" y1="882.0" x2="1031.5" y2="919.5" stroke="#1f7fd4" stroke-width="1.1"/><polygon points="1031.5,919.5 1021.4,916.1 1028.2,909.4" fill="#1f7fd4"/>
<line x1="1054.2" y1="920.0" x2="1054.2" y2="882.0" stroke="#1f7fd4" stroke-width="1.1"/><polygon points="1054.2,882.0 1059.0,891.5 1049.4,891.5" fill="#1f7fd4"/>
<line x1="1563" y1="583.500" x2="1607" y2="583.500" stroke="#666" stroke-width="1" stroke-dasharray="3 2"/>
<polygon points="1609.0,583.5 1602.0,587.5 1602.0,579.5" fill="#1560b0"/>
<rect x="1560.500" y="580.500" width="5" height="5" fill="#cfd6ea" stroke="#9aa6c8" stroke-width=".8"/><rect x="1607.500" y="580.500" width="5" height="5" fill="#cfd6ea" stroke="#9aa6c8" stroke-width=".8"/>
<g transform="translate(1046.0 566.0)"><path d="M1 .8h10.500l2 2V13.500q0 1-1 1H2q-1 0-1-1z" fill="#fff" stroke="#111" stroke-width="1.300"/><path d="M1 12.500V14q0 1 1 1H12" stroke="#000" stroke-width="1.800" fill="none"/><path d="M3.200 5.200l2.600 2.600L10.500 2.500" stroke="#2e9a2e" stroke-width="1.900" fill="none"/><path d="M13.500 2.200L7.500 9.500" stroke="#222" stroke-width="1.400"/><path d="M4 10.500h4" stroke="#999" stroke-width="1"/><rect x="10.300" y="7" width="4" height="8" fill="#8a9fe0"/><rect x="11.300" y="6" width="2.200" height="3" fill="#c9d3f5"/></g>
<text x="1053.5" y="597.1" text-anchor="middle" fill="#000">销售审核</text>
<g transform="translate(1230.0 566.0)"><path d="M1 .8h10.500l2 2V13.500q0 1-1 1H2q-1 0-1-1z" fill="#fff" stroke="#111" stroke-width="1.300"/><path d="M1 12.500V14q0 1 1 1H12" stroke="#000" stroke-width="1.800" fill="none"/><path d="M3.200 5.200l2.600 2.600L10.500 2.500" stroke="#2e9a2e" stroke-width="1.900" fill="none"/><path d="M13.500 2.200L7.500 9.500" stroke="#222" stroke-width="1.400"/><path d="M4 10.500h4" stroke="#999" stroke-width="1"/><rect x="10.300" y="7" width="4" height="8" fill="#8a9fe0"/><rect x="11.300" y="6" width="2.200" height="3" fill="#c9d3f5"/></g>
<text x="1237.5" y="597.1" text-anchor="middle" fill="#000">转需求库</text>
<g transform="translate(1166.0 630.0)"><path d="M1 .8h10.500l2 2V13.500q0 1-1 1H2q-1 0-1-1z" fill="#fff" stroke="#111" stroke-width="1.300"/><path d="M1 12.500V14q0 1 1 1H12" stroke="#000" stroke-width="1.800" fill="none"/><path d="M3.200 5.200l2.600 2.600L10.500 2.500" stroke="#2e9a2e" stroke-width="1.900" fill="none"/><path d="M13.500 2.200L7.500 9.500" stroke="#222" stroke-width="1.400"/><path d="M4 10.500h4" stroke="#999" stroke-width="1"/><rect x="10.300" y="7" width="4" height="8" fill="#8a9fe0"/><rect x="11.300" y="6" width="2.200" height="3" fill="#c9d3f5"/></g>
<text x="1173.5" y="661.1" text-anchor="middle" fill="#000">思普特批</text>
<g transform="translate(1239.0 621.0)"><path d="M1 .8h10.500l2 2V13.500q0 1-1 1H2q-1 0-1-1z" fill="#fff" stroke="#111" stroke-width="1.300"/><path d="M1 12.500V14q0 1 1 1H12" stroke="#000" stroke-width="1.800" fill="none"/><path d="M3.200 5.200l2.600 2.600L10.500 2.500" stroke="#2e9a2e" stroke-width="1.900" fill="none"/><path d="M13.500 2.200L7.500 9.500" stroke="#222" stroke-width="1.400"/><path d="M4 10.500h4" stroke="#999" stroke-width="1"/><rect x="10.300" y="7" width="4" height="8" fill="#8a9fe0"/><rect x="11.300" y="6" width="2.200" height="3" fill="#c9d3f5"/></g>
<text x="1246.5" y="652.1" text-anchor="middle" fill="#000">签订协议</text>
<g transform="translate(1239.0 704.0)"><path d="M1 .8h10.500l2 2V13.500q0 1-1 1H2q-1 0-1-1z" fill="#fff" stroke="#111" stroke-width="1.300"/><path d="M1 12.500V14q0 1 1 1H12" stroke="#000" stroke-width="1.800" fill="none"/><path d="M3.200 5.200l2.600 2.600L10.500 2.500" stroke="#2e9a2e" stroke-width="1.900" fill="none"/><path d="M13.500 2.200L7.500 9.500" stroke="#222" stroke-width="1.400"/><path d="M4 10.500h4" stroke="#999" stroke-width="1"/><rect x="10.300" y="7" width="4" height="8" fill="#8a9fe0"/><rect x="11.300" y="6" width="2.200" height="3" fill="#c9d3f5"/></g>
<text x="1246.5" y="735.1" text-anchor="middle" fill="#000">开发部开发</text>
<g transform="translate(1368.0 704.0)"><path d="M1 .8h10.500l2 2V13.500q0 1-1 1H2q-1 0-1-1z" fill="#fff" stroke="#111" stroke-width="1.300"/><path d="M1 12.500V14q0 1 1 1H12" stroke="#000" stroke-width="1.800" fill="none"/><path d="M3.200 5.200l2.600 2.600L10.500 2.500" stroke="#2e9a2e" stroke-width="1.900" fill="none"/><path d="M13.500 2.200L7.500 9.500" stroke="#222" stroke-width="1.400"/><path d="M4 10.500h4" stroke="#999" stroke-width="1"/><rect x="10.300" y="7" width="4" height="8" fill="#8a9fe0"/><rect x="11.300" y="6" width="2.200" height="3" fill="#c9d3f5"/></g>
<text x="1375.5" y="735.1" text-anchor="middle" fill="#000">发布更新</text>
<g transform="translate(1046.0 759.0)"><path d="M1 .8h10.500l2 2V13.500q0 1-1 1H2q-1 0-1-1z" fill="#fff" stroke="#111" stroke-width="1.300"/><path d="M1 12.500V14q0 1 1 1H12" stroke="#000" stroke-width="1.800" fill="none"/><path d="M3.200 5.200l2.600 2.600L10.500 2.500" stroke="#2e9a2e" stroke-width="1.900" fill="none"/><path d="M13.500 2.200L7.500 9.500" stroke="#222" stroke-width="1.400"/><path d="M4 10.500h4" stroke="#999" stroke-width="1"/><rect x="10.300" y="7" width="4" height="8" fill="#8a9fe0"/><rect x="11.300" y="6" width="2.200" height="3" fill="#c9d3f5"/></g>
<text x="1053.5" y="790.1" text-anchor="middle" fill="#000">问题分析</text>
<g transform="translate(1257.0 778.0)"><path d="M1 .8h10.500l2 2V13.500q0 1-1 1H2q-1 0-1-1z" fill="#fff" stroke="#111" stroke-width="1.300"/><path d="M1 12.500V14q0 1 1 1H12" stroke="#000" stroke-width="1.800" fill="none"/><path d="M3.200 5.200l2.600 2.600L10.500 2.500" stroke="#2e9a2e" stroke-width="1.900" fill="none"/><path d="M13.500 2.200L7.500 9.500" stroke="#222" stroke-width="1.400"/><path d="M4 10.500h4" stroke="#999" stroke-width="1"/><rect x="10.300" y="7" width="4" height="8" fill="#8a9fe0"/><rect x="11.300" y="6" width="2.200" height="3" fill="#c9d3f5"/></g>
<text x="1264.5" y="809.1" text-anchor="middle" fill="#000">配置开发</text>
<g transform="translate(1046.0 842.0)"><path d="M1 .8h10.500l2 2V13.500q0 1-1 1H2q-1 0-1-1z" fill="#fff" stroke="#111" stroke-width="1.300"/><path d="M1 12.500V14q0 1 1 1H12" stroke="#000" stroke-width="1.800" fill="none"/><path d="M3.200 5.200l2.600 2.600L10.500 2.500" stroke="#2e9a2e" stroke-width="1.900" fill="none"/><path d="M13.500 2.200L7.500 9.500" stroke="#222" stroke-width="1.400"/><path d="M4 10.500h4" stroke="#999" stroke-width="1"/><rect x="10.300" y="7" width="4" height="8" fill="#8a9fe0"/><rect x="11.300" y="6" width="2.200" height="3" fill="#c9d3f5"/></g>
<text x="1053.5" y="873.1" text-anchor="middle" fill="#000">接收及分类</text>
<g transform="translate(1166.0 842.0)"><path d="M1 .8h10.500l2 2V13.500q0 1-1 1H2q-1 0-1-1z" fill="#fff" stroke="#111" stroke-width="1.300"/><path d="M1 12.500V14q0 1 1 1H12" stroke="#000" stroke-width="1.800" fill="none"/><path d="M3.200 5.200l2.600 2.600L10.500 2.500" stroke="#2e9a2e" stroke-width="1.900" fill="none"/><path d="M13.500 2.200L7.500 9.500" stroke="#222" stroke-width="1.400"/><path d="M4 10.500h4" stroke="#999" stroke-width="1"/><rect x="10.300" y="7" width="4" height="8" fill="#8a9fe0"/><rect x="11.300" y="6" width="2.200" height="3" fill="#c9d3f5"/></g>
<text x="1173.5" y="873.1" text-anchor="middle" fill="#000">回复客户</text>
<g transform="translate(1368.0 842.0)"><path d="M1 .8h10.500l2 2V13.500q0 1-1 1H2q-1 0-1-1z" fill="#fff" stroke="#111" stroke-width="1.300"/><path d="M1 12.500V14q0 1 1 1H12" stroke="#000" stroke-width="1.800" fill="none"/><path d="M3.200 5.200l2.600 2.600L10.500 2.500" stroke="#2e9a2e" stroke-width="1.900" fill="none"/><path d="M13.500 2.200L7.500 9.500" stroke="#222" stroke-width="1.400"/><path d="M4 10.500h4" stroke="#999" stroke-width="1"/><rect x="10.300" y="7" width="4" height="8" fill="#8a9fe0"/><rect x="11.300" y="6" width="2.200" height="3" fill="#c9d3f5"/></g>
<text x="1375.5" y="873.1" text-anchor="middle" fill="#000">跟踪询问</text>
<g transform="translate(1488.0 842.0)"><path d="M1 .8h10.500l2 2V13.500q0 1-1 1H2q-1 0-1-1z" fill="#fff" stroke="#111" stroke-width="1.300"/><path d="M1 12.500V14q0 1 1 1H12" stroke="#000" stroke-width="1.800" fill="none"/><path d="M3.200 5.200l2.600 2.600L10.500 2.500" stroke="#2e9a2e" stroke-width="1.900" fill="none"/><path d="M13.500 2.200L7.500 9.500" stroke="#222" stroke-width="1.400"/><path d="M4 10.500h4" stroke="#999" stroke-width="1"/><rect x="10.300" y="7" width="4" height="8" fill="#8a9fe0"/><rect x="11.300" y="6" width="2.200" height="3" fill="#c9d3f5"/></g>
<text x="1495.5" y="873.1" text-anchor="middle" fill="#000">客户最终确...</text>
<g transform="translate(1368.0 897.0)"><path d="M1 .8h10.500l2 2V13.500q0 1-1 1H2q-1 0-1-1z" fill="#fff" stroke="#111" stroke-width="1.300"/><path d="M1 12.500V14q0 1 1 1H12" stroke="#000" stroke-width="1.800" fill="none"/><path d="M3.200 5.200l2.600 2.600L10.500 2.500" stroke="#2e9a2e" stroke-width="1.900" fill="none"/><path d="M13.500 2.200L7.500 9.500" stroke="#222" stroke-width="1.400"/><path d="M4 10.500h4" stroke="#999" stroke-width="1"/><rect x="10.300" y="7" width="4" height="8" fill="#8a9fe0"/><rect x="11.300" y="6" width="2.200" height="3" fill="#c9d3f5"/></g>
<text x="1375.5" y="928.1" text-anchor="middle" fill="#000">领导处理</text>
<g transform="translate(1046.0 925.5)"><path d="M1 .8h10.500l2 2V13.500q0 1-1 1H2q-1 0-1-1z" fill="#fff" stroke="#111" stroke-width="1.300"/><path d="M1 12.500V14q0 1 1 1H12" stroke="#000" stroke-width="1.800" fill="none"/><path d="M3.200 5.200l2.600 2.600L10.500 2.500" stroke="#2e9a2e" stroke-width="1.900" fill="none"/><path d="M13.500 2.200L7.500 9.500" stroke="#222" stroke-width="1.400"/><path d="M4 10.500h4" stroke="#999" stroke-width="1"/><rect x="10.300" y="7" width="4" height="8" fill="#8a9fe0"/><rect x="11.300" y="6" width="2.200" height="3" fill="#c9d3f5"/></g>
<g transform="translate(1175.0 925.5)"><path d="M1 .8h10.500l2 2V13.500q0 1-1 1H2q-1 0-1-1z" fill="#fff" stroke="#111" stroke-width="1.300"/><path d="M1 12.500V14q0 1 1 1H12" stroke="#000" stroke-width="1.800" fill="none"/><path d="M3.200 5.200l2.600 2.600L10.500 2.500" stroke="#2e9a2e" stroke-width="1.900" fill="none"/><path d="M13.500 2.200L7.500 9.500" stroke="#222" stroke-width="1.400"/><path d="M4 10.500h4" stroke="#999" stroke-width="1"/><rect x="10.300" y="7" width="4" height="8" fill="#8a9fe0"/><rect x="11.300" y="6" width="2.200" height="3" fill="#c9d3f5"/></g>
<g transform="translate(1524.0 925.5)"><path d="M1 .8h10.500l2 2V13.500q0 1-1 1H2q-1 0-1-1z" fill="#fff" stroke="#111" stroke-width="1.300"/><path d="M1 12.500V14q0 1 1 1H12" stroke="#000" stroke-width="1.800" fill="none"/><path d="M3.200 5.200l2.600 2.600L10.500 2.500" stroke="#2e9a2e" stroke-width="1.900" fill="none"/><path d="M13.500 2.200L7.500 9.500" stroke="#222" stroke-width="1.400"/><path d="M4 10.500h4" stroke="#999" stroke-width="1"/><rect x="10.300" y="7" width="4" height="8" fill="#8a9fe0"/><rect x="11.300" y="6" width="2.200" height="3" fill="#c9d3f5"/></g>
<circle cx="971.200" cy="582.500" r="6.200" fill="#5aa832" stroke="#3c7d1e" stroke-width="1"/><polygon points="969.200,579 969.200,586 974.700,582.500" fill="#fff"/>
<text x="971.0" y="605.6" text-anchor="middle" fill="#000">开始</text>
<rect x="1168.5" y="706.8" width="10" height="8.500" fill="#fff" stroke="#111" stroke-width="1"/>
<text x="1173.5" y="735.1" text-anchor="middle" fill="#000">路径</text>
<rect x="1526.5" y="568.8" width="10" height="8.500" fill="#fff" stroke="#111" stroke-width="1"/>
<text x="1531.5" y="597.1" text-anchor="middle" fill="#000">路径</text>
<rect x="1628" y="569" width="10" height="10" rx="1.500" fill="#e33" stroke="#f99" stroke-width="1.500"/>
<text x="1633.0" y="596.6" text-anchor="middle" fill="#000">结束</text>
<text x="972.300" y="848.300" text-anchor="middle" font-size="5.600" font-weight="bold" fill="#d6f2d6" stroke="#6aa86a" stroke-width=".25">1010</text><text x="972.300" y="853.600" text-anchor="middle" font-size="5.600" font-weight="bold" fill="#d6f2d6" stroke="#6aa86a" stroke-width=".25">0101</text>
<text x="972.5" y="872.6" text-anchor="middle" fill="#000">服务端脚本</text>
</svg>
</div>
</body></html>
